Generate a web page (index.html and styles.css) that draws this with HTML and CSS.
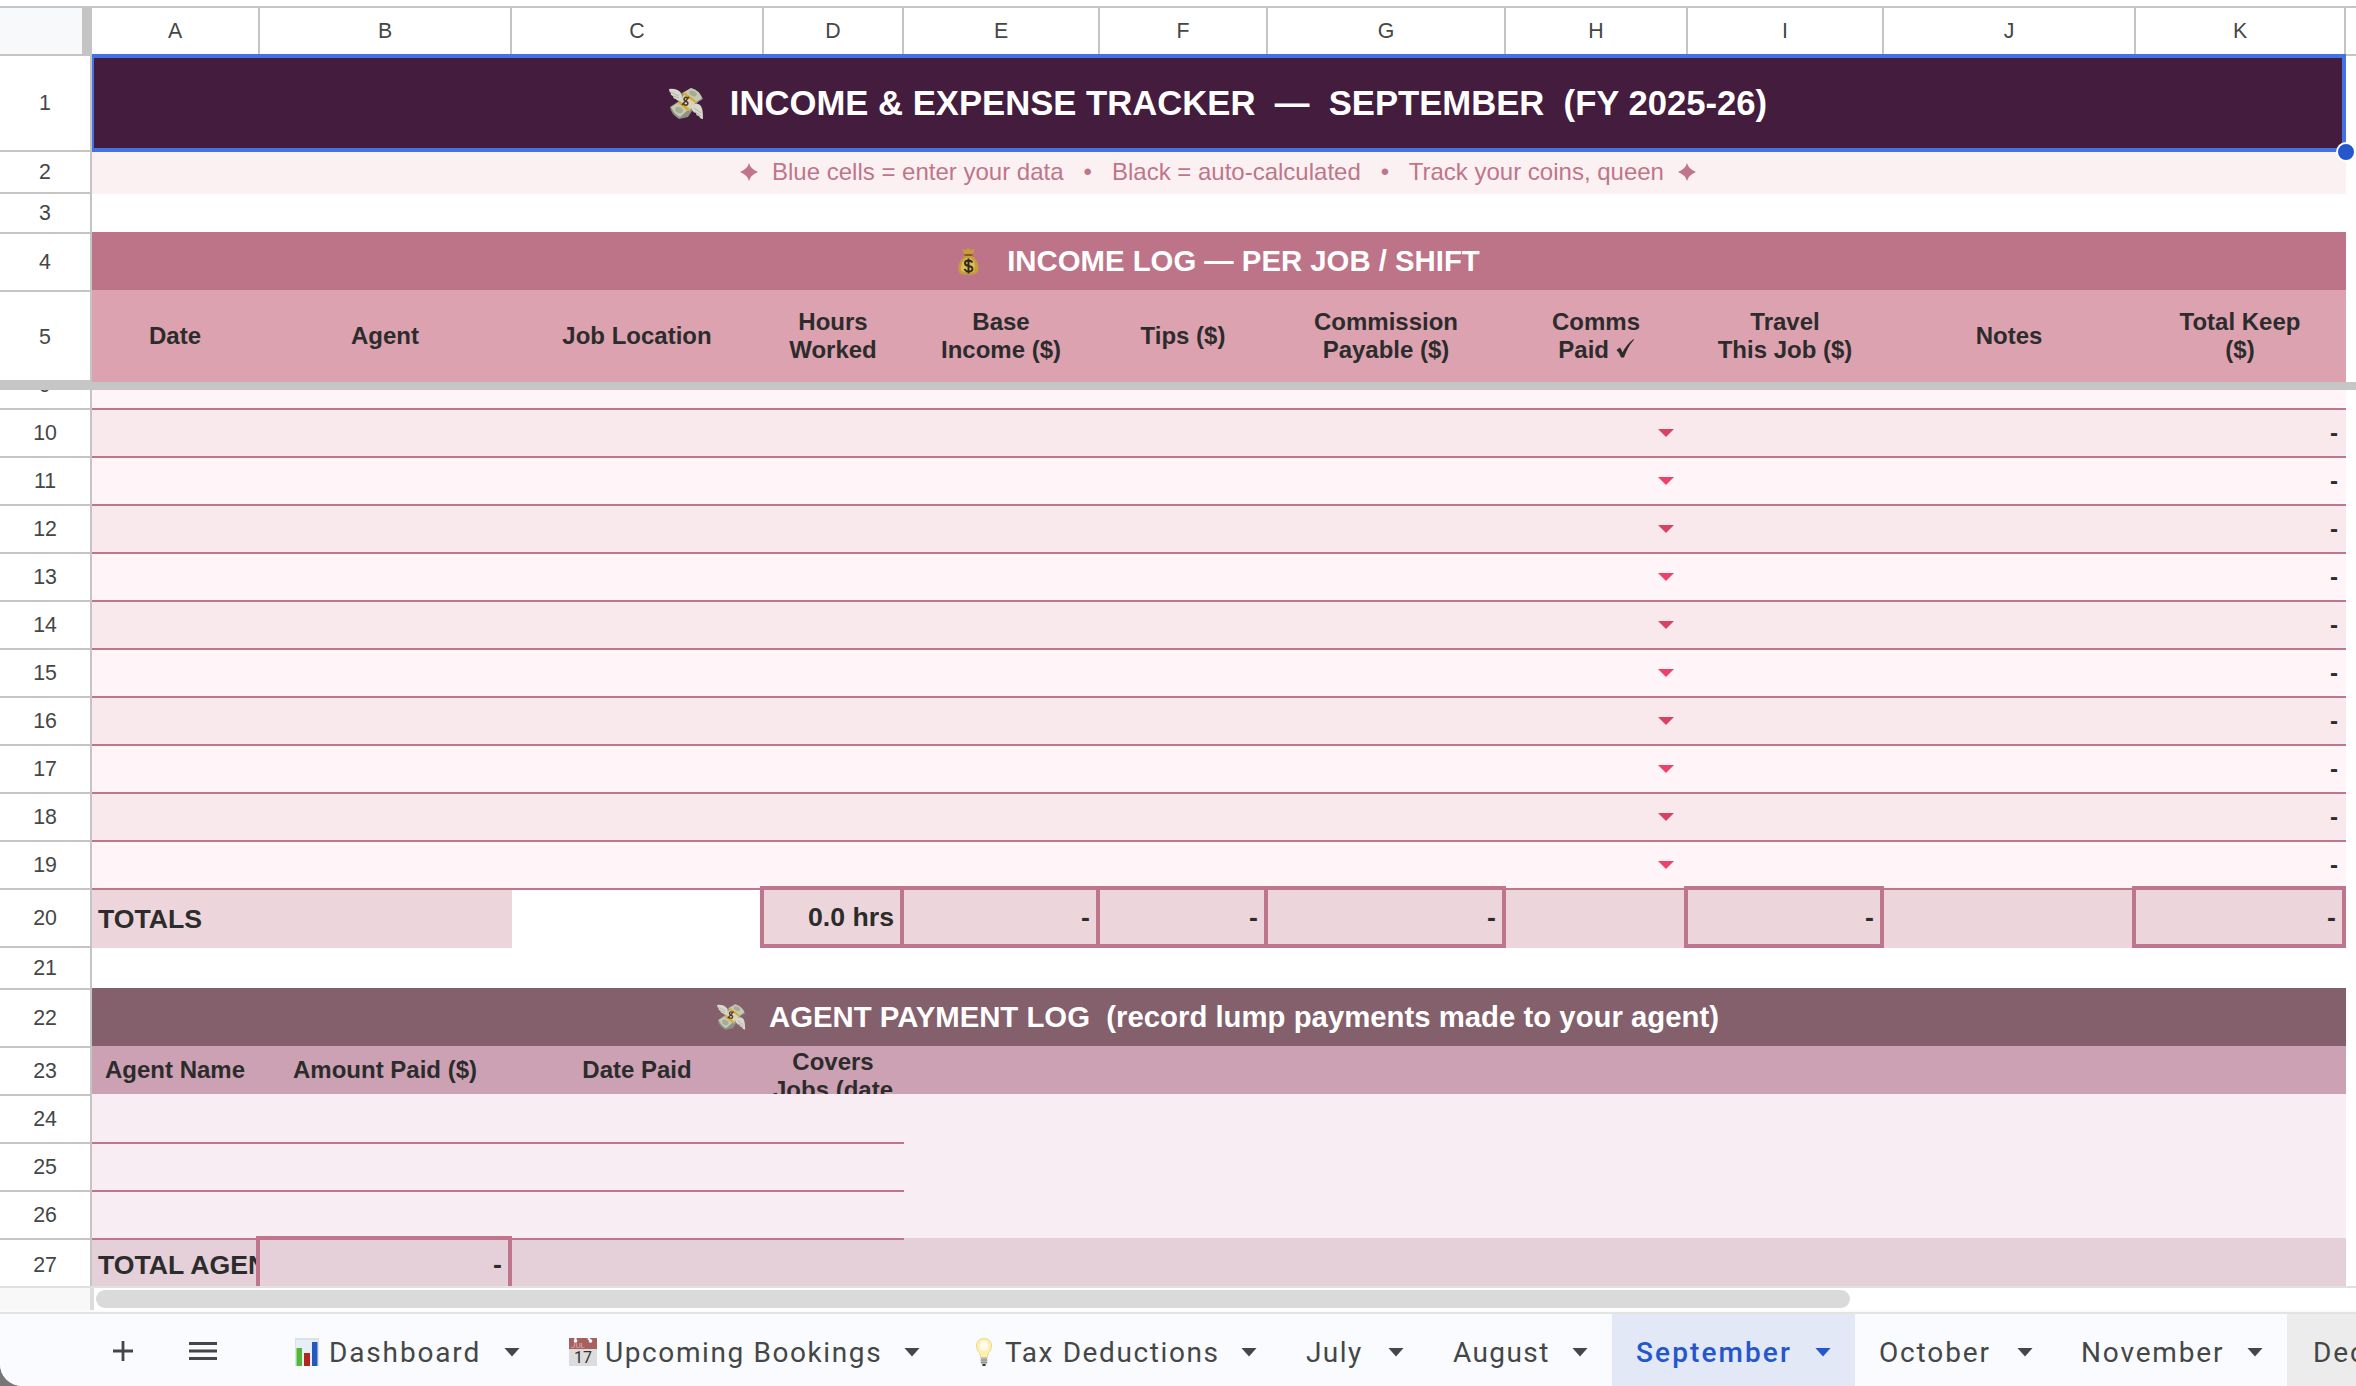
FILE: index.html
```html
<!DOCTYPE html>
<html lang="en">
<head>
    <meta charset="UTF-8">
    <meta name="viewport" content="width=device-width, initial-scale=1.0">
    <title>Income &amp; Expense Tracker</title>
    <link rel="stylesheet" href="styles.css">
</head>
<body>
    <!-- shared icons -->
    <svg class="defs" width="0" height="0">
        <symbol id="wings" viewBox="0 0 35 31">
            <path d="M13 5 L22 0 Q31 3 34 11 L29 14 L19 29 L10 31 Q2 26 1 19 L10 13 Z" fill="#8d9380"/>
            <path d="M14 5 L22 0 Q30 2 33 10 L27 14 Z" fill="#c5c9b4"/>
            <path d="M2 19 L10 14 L19 22 L11 29 Q5 26 2 19 Z" fill="#c5c9b4"/>
            <ellipse cx="24" cy="5.500" rx="4" ry="2.500" transform="rotate(25 24 5.500)" fill="#a5ac94"/>
            <ellipse cx="10" cy="22" rx="4" ry="3" transform="rotate(25 10 22)" fill="#a5ac94"/>
            <path d="M11 13 L16 5 L27 14 L20 23 Z" fill="#d6d5bb"/>
            <path d="M14 6 L16 4.500 L27 13 L26 15 Z M10 13 L9 15 L19 23 L21 21 Z" fill="#e0a72e"/>
            <path d="M19 10 Q16 8 15 11 Q15 13 17.500 13.500 Q20 15 18 17 Q16 18 14 15 M20 9 L13 17" fill="none" stroke="#4b3a20" stroke-width="1.500"/>
            <path d="M0 1 Q8 0 12 5 Q14 8 12 13 Q8 13 7 11 Q4 11 4 8 Q1 7 2 5 Q0 4 0 1 Z" fill="#d9d8cd"/>
            <path d="M22 18 Q27 14 31 17 Q34 19 34 31 Q31 31 30 28 Q27 28 27 25 Q23 25 22 18 Z" fill="#d9d8cd"/>
            <path d="M2 4 L10 8 M4 8 L10 10 M25 20 L32 25 M26 24 L32 28" stroke="#aaa99b" stroke-width="0.800"/>
        </symbol>
        <symbol id="bag" viewBox="0 0 21 27">
            <path d="M4 1 L8 2 L10 0 L13 2 L17 1 L14 8 Q21 13 20.500 22 Q20 27 10.500 27 Q0 27 0.500 22 Q0 13 7 8 Z" fill="#c49d3c"/>
            <path d="M8 10 Q2 14 3 23 Q8 25 16 24 Q19 15 13 10 Z" fill="#dcba55"/>
            <path d="M6.500 7 H14.500" stroke="#8b5728" stroke-width="2"/>
            <path d="M14.500 14.500 Q13 12.500 10.500 12.500 Q7 12.500 7 15 Q7 17.500 10.500 18 Q14.500 18.500 14.500 21 Q14.500 23.500 10.500 23.500 Q7.500 23.500 6.500 21 M10.500 10.500 V25.500" fill="none" stroke="#2c2920" stroke-width="1.900"/>
        </symbol>
        <symbol id="chart" viewBox="0 0 24 28">
            <rect width="24" height="28" fill="#d9e2ea"/>
            <rect x="1" y="2" width="22" height="26" fill="#e8eef6"/>
            <rect x="1.500" y="10" width="5.500" height="18" fill="#53b737"/>
            <rect x="9" y="15" width="6" height="13" fill="#b3251d"/>
            <rect x="17" y="4" width="5.500" height="24" fill="#2458bd"/>
        </symbol>
        <symbol id="calendar" viewBox="0 0 28 28">
            <rect width="28" height="28" fill="#dcdcdc"/>
            <rect width="28" height="11" fill="#a75f5f"/>
            <path d="M6.500 0 V3 M19 0 L22 3" stroke="#fff" stroke-width="2"/>
            <circle cx="6.500" cy="3" r="1.800" fill="#fff"/>
            <circle cx="21.500" cy="3" r="1.800" fill="#fff"/>
            <text class="cal-month" x="2" y="10">JUL</text>
            <text class="cal-day" x="14" y="24.500" text-anchor="middle">17</text>
        </symbol>
        <symbol id="bulb" viewBox="0 0 16 28">
            <path d="M8 0.500 Q15.500 0.500 15.500 8 Q15.500 12 12.500 15.500 Q11.500 17 11.500 19.500 H4.500 Q4.500 17 3.500 15.500 Q0.500 12 0.500 8 Q0.500 0.500 8 0.500 Z" fill="#fbefb4" stroke="#ecd98c"/>
            <ellipse cx="8" cy="8" rx="4.500" ry="5" fill="#fffbe8"/>
            <path d="M4.800 19.500 H11.200 V25 L9.500 27.500 H6.500 L4.800 25 Z" fill="#b9b7b0"/>
            <path d="M4.800 22 H11.200 M4.800 24.500 H11.200" stroke="#8a8884" stroke-width="0.800"/>
            <path d="M6.500 26 H9.500 V28 H6.500 Z" fill="#3c3c3c"/>
        </symbol>
    </svg>

    <div class="app">
        <!-- column letters -->
        <div class="col-header">
            <div class="corner"></div>
            <div class="letters cols" id="letters"></div>
        </div>

        <!-- frozen rows -->
        <div class="pane frozen">
            <div class="numbers">
                <div class="num n1">1</div>
                <div class="num n2">2</div>
                <div class="num n3">3</div>
                <div class="num n4">4</div>
                <div class="num n5">5</div>
            </div>
            <div class="cells">
                <div class="banner title">
                    <svg class="ico-title"><use href="#wings"/></svg><span>INCOME &amp; EXPENSE TRACKER  —  SEPTEMBER  (FY 2025-26)</span>
                    <div class="selection"></div>
                    <div class="handle"></div>
                </div>
                <div class="banner subtitle">
                    <svg class="star" viewBox="0 0 18 18"><path d="M9 0 Q10.500 6 18 9 Q10.500 12 9 18 Q7.500 12 0 9 Q7.500 6 9 0 Z"/></svg>
                    <span>Blue cells = enter your data   •   Black = auto-calculated   •   Track your coins, queen</span>
                    <svg class="star" viewBox="0 0 18 18"><path d="M9 0 Q10.500 6 18 9 Q10.500 12 9 18 Q7.500 12 0 9 Q7.500 6 9 0 Z"/></svg>
                </div>
                <div class="blank"></div>
                <div class="banner section income">
                    <svg class="ico-bag"><use href="#bag"/></svg><span>INCOME LOG — PER JOB / SHIFT</span>
                </div>
                <div class="cols head">
                    <div>Date</div>
                    <div>Agent</div>
                    <div>Job Location</div>
                    <div>Hours<br>Worked</div>
                    <div>Base<br>Income ($)</div>
                    <div>Tips ($)</div>
                    <div>Commission<br>Payable ($)</div>
                    <div>Comms<br><span>Paid <svg class="check" viewBox="0 0 18 19"><path d="M0.500 11 L4 8.500 Q5.500 10.500 6.500 13.500 Q10 6 17.500 0 L18 0.800 Q11.500 8 8 18.500 L5 18.500 Q3.500 13.500 0.500 11 Z"/></svg></span></div>
                    <div>Travel<br>This Job ($)</div>
                    <div>Notes</div>
                    <div>Total Keep<br>($)</div>
                </div>
            </div>
        </div>
        <div class="freeze-bar"></div>

        <!-- scrolling rows -->
        <div class="pane scroll">
            <div class="numbers" id="rowNumbers"></div>
            <div class="cells">
                <div id="logRows"></div>
                <div class="cols totals">
                    <div class="label">TOTALS</div>
                    <div></div>
                    <div class="empty"></div>
                    <div class="boxed">0.0 hrs</div>
                    <div class="boxed">-</div>
                    <div class="boxed">-</div>
                    <div class="boxed">-</div>
                    <div></div>
                    <div class="boxed">-</div>
                    <div></div>
                    <div class="boxed">-</div>
                </div>
                <div class="blank2"></div>
                <div class="banner section agent">
                    <svg class="ico-wings"><use href="#wings"/></svg><span>AGENT PAYMENT LOG  (record lump payments made to your agent)</span>
                </div>
                <div class="cols agent-head">
                    <div>Agent Name</div>
                    <div>Amount Paid ($)</div>
                    <div>Date Paid</div>
                    <div class="covers">Covers<br>Jobs (date</div>
                </div>
                <div class="cols pay first"><div></div></div>
                <div class="cols pay"><div></div></div>
                <div class="cols pay"><div></div></div>
                <div class="cols pay agent-total">
                    <div></div>
                    <div class="label">TOTAL AGENT</div>
                    <div class="boxed">-</div>
                </div>
            </div>
        </div>

        <div class="scrollbar">
            <div class="scroll-corner"></div>
            <div class="thumb"></div>
        </div>

        <!-- sheet tabs -->
        <div class="tabs">
            <div class="tools">
                <svg width="20" height="20" viewBox="0 0 20 20"><path d="M10 0 V20 M0 10 H20"/></svg>
                <svg width="28" height="18" viewBox="0 0 28 18"><path d="M0 1.500 H28 M0 9 H28 M0 16.500 H28"/></svg>
            </div>
            <div class="tab"><svg class="ico-chart"><use href="#chart"/></svg><span>Dashboard</span><i></i></div>
            <div class="tab long"><svg class="ico-cal"><use href="#calendar"/></svg><span>Upcoming Bookings</span><i></i></div>
            <div class="tab long"><svg class="ico-bulb"><use href="#bulb"/></svg><span>Tax Deductions</span><i></i></div>
            <div class="tab short"><span>July</span><i></i></div>
            <div class="tab short"><span>August</span><i></i></div>
            <div class="tab active"><span>September</span><i></i></div>
            <div class="tab"><span>October</span><i></i></div>
            <div class="tab"><span>November</span><i></i></div>
            <div class="tab more"><span>Dec</span></div>
        </div>
    </div>

    <script>
        const letters = document.getElementById("letters");
        for (const letter of "ABCDEFGHIJK") {
            letters.innerHTML += `<div>${letter}</div>`;
        }

        const rowNumbers = document.getElementById("rowNumbers");
        for (let n = 9; n <= 27; n++) {
            rowNumbers.innerHTML += `<div class="num n${n}">${n}</div>`;
        }

        // rows 9 to 19: paid dropdown in H, total keep in K
        const logRows = document.getElementById("logRows");
        for (let n = 9; n <= 19; n++) {
            logRows.innerHTML += `
                <div class="cols log ${n % 2 ? "odd" : "even"}">
                    <div class="paid"><i></i></div>
                    <div class="keep">${n > 9 ? "-" : ""}</div>
                </div>
            `;
        }
    </script>
</body>
</html>
```

FILE: styles.css
```css
/* Basic styles */
* {
    box-sizing: border-box;
}
body {
    margin: 0;
    background-color: #777;
    font-family: "Liberation Sans", Arial, sans-serif;
    color: #2c2c2c;
}
svg {
    flex: none;
    overflow: visible;
}
.defs {
    position: absolute;
}
.app {
    width: 2356px;
    height: 1386px;
    overflow: hidden;
    background-color: #fff;
    border-bottom-left-radius: 22px;
    display: flex;
    flex-direction: column;
}
.cols {
    display: grid;
    grid-template-columns: 168px 252px 252px 140px 196px 168px 238px 182px 196px 252px 210px;
    width: 2254px;
}

/* Column letters */
.col-header {
    display: flex;
    height: 50px;
    margin-top: 6px;
    border-top: 2px solid #c4c4c4;
    border-bottom: 2px solid #c4c4c4;
}
.corner {
    width: 92px;
    background-color: #f8f9fb;
    border-right: 10px solid #c4c4c4;
}
.letters div {
    display: flex;
    align-items: center;
    justify-content: center;
    border-right: 2px solid #c4c4c4;
    font-size: 21.33px;
    color: #444746;
}

/* Row numbers */
.pane {
    display: flex;
}
.numbers {
    width: 92px;
    border-right: 2px solid #c4c4c4;
}
.num {
    height: 48px;
    display: flex;
    align-items: center;
    justify-content: center;
    padding-top: 1px;
    border-bottom: 2px solid #c4c4c4;
    font-size: 21.33px;
    color: #444746;
}
.n1 { height: 96px; }
.n2 { height: 42px; padding-top: 0; }
.n3 { height: 40px; }
.n4 { height: 58px; padding-top: 0; }
.n5 { height: 90px; border-bottom: 0; padding-top: 0; }
.n9 { margin-top: -28px; }
.n20 { height: 58px; padding-top: 0; }
.n21 { height: 42px; padding-top: 0; }
.n22 { height: 58px; padding-top: 0; }
.n27 { height: 54px; padding: 0 0 2px; }

/* Frozen rows */
.frozen {
    height: 326px;
}
.cells {
    width: 2254px;
}
.banner {
    display: flex;
    align-items: center;
    justify-content: center;
    white-space: pre;
    position: relative;
}
.title {
    height: 96px;
    padding: 0 2px 1px 0;
    background-color: #441c3d;
    color: #fff;
    font-size: 34.67px;
    font-weight: bold;
}
.ico-title {
    width: 35px;
    height: 31px;
    margin-right: 26px;
}
.selection {
    position: absolute;
    top: -2px;
    left: 0;
    right: 0;
    bottom: 0;
    border: 4px solid #4272e3;
    border-left-width: 2px;
}
.handle {
    position: absolute;
    right: -10px;
    bottom: -10px;
    width: 20px;
    height: 20px;
    border: 2px solid #fff;
    border-radius: 50%;
    background-color: #2456cc;
    z-index: 2;
}
.subtitle {
    height: 42px;
    padding: 0 2px 2px 0;
    background-color: #fcf1f2;
    color: #bf758b;
    font-size: 24px;
    gap: 14px;
}
.star {
    width: 18px;
    height: 18px;
    fill: #bf758b;
}
.blank {
    height: 38px;
}
.section {
    height: 58px;
    color: #fff;
    font-size: 29.33px;
    font-weight: bold;
}
.income {
    background-color: #bd7488;
}
.ico-bag {
    width: 21px;
    height: 27px;
    margin-right: 28px;
}
.head {
    height: 92px;
    background-color: #dda2b0;
}
.head div,
.agent-head div {
    display: flex;
    flex-direction: column;
    align-items: center;
    justify-content: center;
    padding-right: 2px;
    font-size: 24px;
    line-height: 28px;
    font-weight: bold;
    text-align: center;
}
.head div {
    display: block;
    align-self: center;
}
.check {
    width: 18px;
    height: 19px;
    fill: #2c2c2c;
}
.freeze-bar {
    height: 10px;
    margin-top: -2px;
    background-color: #c6c6c6;
    clip-path: polygon(0 0, 90px 0, 90px 2px, 100% 2px, 100% 100%, 0 100%);
}

/* Income log */
.scroll {
    height: 896px;
    overflow: hidden;
}
.log {
    height: 48px;
    border-top: 2px solid #bf758b;
}
.log:first-child {
    margin-top: -30px;
}
.odd {
    background-color: #fff4f7;
}
.even {
    background-color: #f9e8ec;
}
.paid {
    grid-column: 8;
    display: flex;
    align-items: center;
    justify-content: flex-end;
    padding-right: 14px;
}
.paid i,
.tab i {
    width: 16px;
    height: 8px;
    background-color: #ee4069;
    clip-path: polygon(0 0, 100% 0, 50% 100%);
}
.even .paid i {
    background-color: #da4264;
}
.keep {
    grid-column: 11;
    text-align: right;
    padding-right: 8px;
    font-size: 24px;
    font-weight: bold;
    line-height: 46px;
}
.totals {
    height: 60px;
}
.totals div {
    background-color: #edd6db;
    border-top: 2px solid #bf758b;
}
.totals .empty {
    background-color: #fff;
}
.label {
    padding-left: 6px;
    font-size: 26.67px;
    font-weight: bold;
    line-height: 58px;
    white-space: nowrap;
    overflow: hidden;
}
.totals .boxed,
.agent-total .boxed {
    position: relative;
    z-index: 1;
    margin: -2px 0 0 -4px;
    padding-right: 6px;
    border: 4px solid #bf758b;
    font-size: 26.67px;
    font-weight: bold;
    line-height: 54px;
    text-align: right;
}
.blank2 {
    height: 40px;
}

/* Agent payment log */
.agent {
    padding-right: 2px;
    background-color: #84606d;
}
.ico-wings {
    width: 29px;
    height: 26px;
    margin-right: 23px;
}
.agent-head {
    height: 48px;
    grid-template-rows: 48px;
    background-color: #cca1b4;
    overflow: hidden;
}
.agent-head .covers {
    justify-content: flex-start;
    padding-top: 2px;
}
.pay {
    height: 48px;
    background-color: #f7edf3;
}
.pay > div:first-child {
    grid-column: 1 / 5;
    grid-row: 1;
    border-top: 2px solid #bf758b;
}
.first > div:first-child {
    border-top: 0;
}
.agent-total {
    background-color: #e5d0d9;
}
.agent-total .label {
    grid-column: 1;
    grid-row: 1;
    line-height: 54px;
}
.agent-total .boxed {
    grid-column: 2;
    grid-row: 1;
    border-bottom: 0;
    height: 56px;
    line-height: 49px;
}

/* Scrollbar */
.scrollbar {
    height: 28px;
    display: flex;
    border-top: 2px solid #e0e0e0;
    border-bottom: 2px solid #e1e4e1;
    background: linear-gradient(#fff 22px, #f9fbfe 22px);
}
.scroll-corner {
    width: 94px;
    height: 22px;
    background-color: #f8f8f8;
    border-right: 4px solid #dcdcdc;
}
.thumb {
    width: 1754px;
    height: 18px;
    margin: 2px 0 0 2px;
    border-radius: 9px;
    background-color: #dadada;
}

/* Sheet tabs */
.tabs {
    height: 72px;
    display: grid;
    grid-template-columns: 271px 273px 400px 337px 147px 184px 243px 202px 230px 69px;
    background-color: #f9fbff;
    font-family: Roboto, sans-serif;
    font-size: 28px;
    letter-spacing: 1.85px;
    color: #444746;
}
.tools {
    display: flex;
    align-items: center;
    gap: 56px;
    padding: 2px 0 0 113px;
}
.tools svg {
    stroke: #444746;
    stroke-width: 2.8;
}
.tab {
    display: flex;
    align-items: center;
    padding: 4px 24px 0;
    overflow: hidden;
}
.tab i {
    height: 9px;
    margin-left: auto;
    background-color: #444746;
}
.long {
    letter-spacing: 1.6px;
}
.short {
    letter-spacing: 1.4px;
    padding-left: 25px;
}
.active {
    background-color: #e2e8f6;
    color: #2456cc;
    font-weight: 500;
    letter-spacing: 2.1px;
}
.active i {
    background-color: #2456cc;
}
.more {
    background-color: #ececec;
    padding-left: 26px;
    padding-right: 0;
}
.ico-chart {
    width: 24px;
    height: 28px;
    margin-right: 10px;
}
.ico-cal {
    width: 28px;
    height: 28px;
    margin: 0 8px 0 1px;
}
.ico-bulb {
    width: 16px;
    height: 28px;
    margin: 0 13px 0 8px;
}
.cal-month {
    font-size: 8px;
    letter-spacing: 0;
    fill: #d9b3b3;
}
.cal-day {
    font-size: 16px;
    letter-spacing: 0;
    fill: #333;
}
```
